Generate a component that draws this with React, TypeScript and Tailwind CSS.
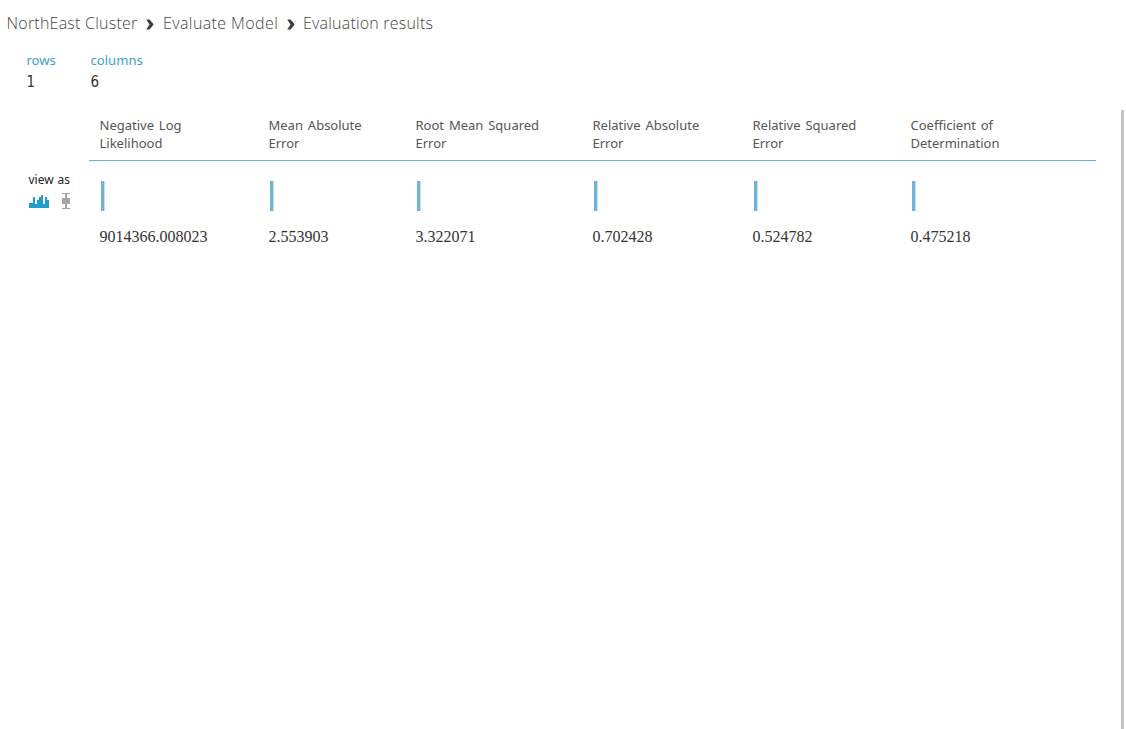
const metrics = [
  { lines: ['Negative Log', 'Likelihood'], value: '9014366.008023', width: 'w-[169px]' },
  { lines: ['Mean Absolute', 'Error'], value: '2.553903', width: 'w-[147px]' },
  { lines: ['Root Mean Squared', 'Error'], value: '3.322071', width: 'w-[177px]' },
  { lines: ['Relative Absolute', 'Error'], value: '0.702428', width: 'w-[160px]' },
  { lines: ['Relative Squared', 'Error'], value: '0.524782', width: 'w-[158px]' },
  { lines: ['Coefficient of', 'Determination'], value: '0.475218', width: 'w-[196px]' },
];

function Chevron() {
  return (
    <svg width="8" height="11" viewBox="0 0 8 11" className="mt-[7px] shrink-0" fill="#363f49">
      <path d="M0.2 0.5H3.5L7.3 4.7V6.1L3.5 10.4H0.2L3.5 5.5Z" />
    </svg>
  );
}

function HistogramIcon() {
  return (
    <svg width="20" height="16" viewBox="0 0 20 16" shapeRendering="crispEdges" fill="#219ecb">
      <path d="M0 15V10H4V4H6V11H8V7H10V4H12V2H14V11H16V4H18V7H20V15Z" />
    </svg>
  );
}

function BoxPlotIcon() {
  return (
    <svg width="8" height="16" viewBox="0 0 8 16" shapeRendering="crispEdges" fill="#a3a5a8">
      <path d="M0 0H8V1H5V5H8V11H5V15H8V16H0V15H3V11H0V5H3V1H0Z" />
    </svg>
  );
}

export default function App() {
  return (
    <div className="flex h-[729px] w-[1126px] flex-col overflow-hidden bg-white font-['Noto_Sans',sans-serif]">
      <nav className="flex h-[46px] items-start pl-[6.5px] pt-3 font-['Open_Sans',sans-serif] text-base leading-[22px] font-light text-[#444]">
        <span className="w-[139.5px] whitespace-nowrap tracking-[0.23px]">NorthEast Cluster</span>
        <Chevron />
        <span className="ml-[9px] w-[123.5px] whitespace-nowrap tracking-[0.4px]">Evaluate Model</span>
        <Chevron />
        <span className="ml-[8.5px] whitespace-nowrap tracking-[0.2px]">Evaluation results</span>
      </nav>
      <dl className="flex h-16 pl-[26.5px] pt-[5px]">
        <div className="w-16">
          <dt className="text-[13px] leading-[18px] text-[#3a9fd0]">rows</dt>
          <dd className="mt-[3px] font-['DejaVu_Sans_Condensed','DejaVu_Sans',sans-serif] text-[15px] leading-5 font-normal text-[#333]">1</dd>
        </div>
        <div>
          <dt className="text-[13px] leading-[18px] tracking-[0.05px] text-[#3a9fd0]">columns</dt>
          <dd className="mt-[3px] font-['DejaVu_Sans_Condensed','DejaVu_Sans',sans-serif] text-[15px] leading-5 font-normal text-[#333]">6</dd>
        </div>
      </dl>
      <main className="flex min-h-0 flex-1">
        <aside className="w-[89px] pl-7 pt-[61px]">
          <div className="pl-[0.5px] text-xs leading-[18px] [word-spacing:0.7px] whitespace-nowrap text-[#222]">view as</div>
          <div className="mt-1 flex gap-[13px] pl-px">
            <HistogramIcon />
            <BoxPlotIcon />
          </div>
        </aside>
        <section className="w-[1007px]">
          <div className="flex h-[51px] border-b border-[#72aed0] pt-[6px] pl-[10.5px]">
            {metrics.map((m) => (
              <div key={m.value} className={`${m.width} shrink-0 whitespace-nowrap text-[13px] leading-[18px] [word-spacing:1.5px] text-[#555]`}>
                {m.lines.map((line) => (
                  <div key={line}>{line}</div>
                ))}
              </div>
            ))}
          </div>
          <div className="flex pt-5 pl-[10.5px]">
            {metrics.map((m) => (
              <div key={m.value} className={`${m.width} shrink-0`}>
                <div className="ml-[1.5px] h-[30px] w-1 border-r border-[#c3dfec] bg-[#72b2d3]" />
                <div className="mt-[16px] font-['Liberation_Serif',serif] text-base leading-5 text-[#333]">{m.value}</div>
              </div>
            ))}
          </div>
        </section>
        <div className="ml-[25px] w-[3px] bg-[#c3c3c3]" />
      </main>
    </div>
  );
}
